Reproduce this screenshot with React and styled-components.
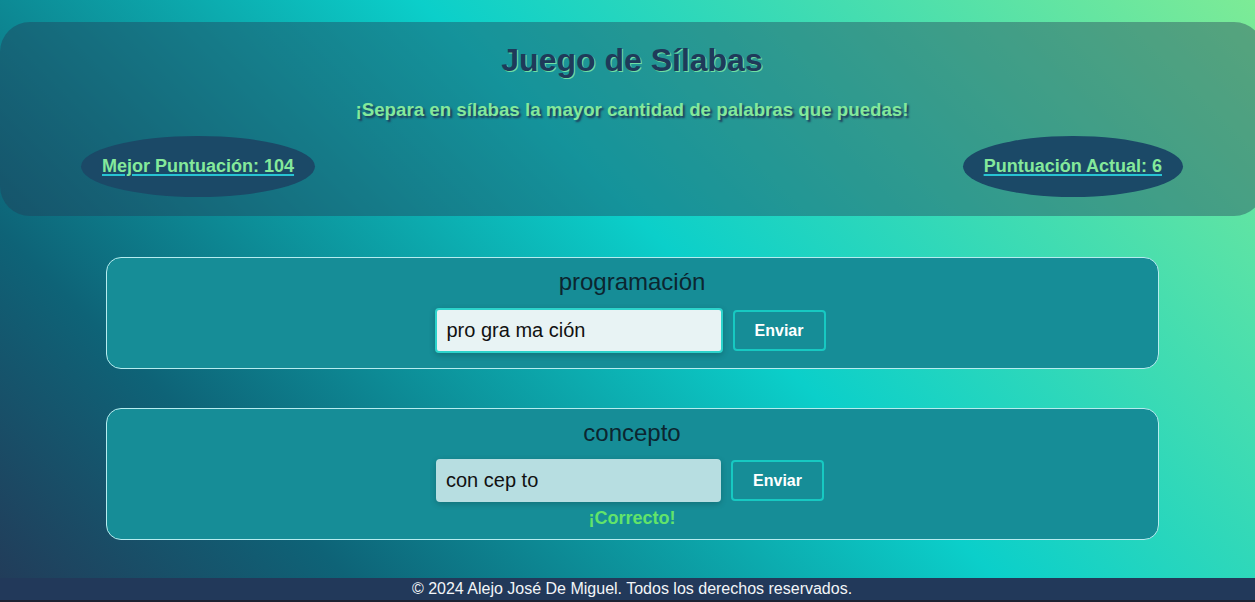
import React from "react";
import styled, { createGlobalStyle } from "styled-components";

const Global = createGlobalStyle`
  html, body {
    margin: 0;
    padding: 0;
    overflow-x: hidden;
  }
  body {
    min-height: 100vh;
    font-family: "Liberation Sans", Arial, sans-serif;
    background: linear-gradient(45deg, #233a58 0%, #0e6377 20%, #0bcfca 55%, #7deb96 100%);
  }
`;

const Page = styled.div`
  width: 1264px;
  display: flex;
  flex-direction: column;
  padding-top: 22px;
`;

const Header = styled.header`
  background: rgba(34, 58, 85, 0.4);
  border-radius: 30px;
  padding: 20px 81px 19px;
  display: flex;
  flex-direction: column;
  align-items: center;
`;

const Title = styled.h1`
  margin: 0;
  font-size: 32px;
  line-height: 37px;
  font-weight: 700;
  color: #1f3a5a;
  text-shadow: 1px 1px 0 #6fe0a4;
`;

const Subtitle = styled.h3`
  margin: 20px 0 0;
  font-size: 18.72px;
  line-height: 22px;
  font-weight: 700;
  color: #84e99b;
  text-shadow: 2px 2px 2px #1f3a5a;
`;

const ScoreRow = styled.div`
  align-self: stretch;
  display: flex;
  justify-content: space-between;
  margin-top: 15px;
`;

const ScoreBadge = styled.div`
  background: #1b4967;
  border-radius: 50%;
  padding: 20px 21px;
  font-size: 18px;
  line-height: 21px;
  font-weight: 700;
  color: #84e99b;
  text-decoration: underline;
  text-decoration-color: #27c4d4;
  text-decoration-thickness: 2px;
  text-underline-offset: 2px;
`;

const Main = styled.main`
  display: flex;
  flex-direction: column;
  align-items: center;
  gap: 39px;
  padding-top: 41px;
`;

const Card = styled.section`
  width: 1011px;
  padding: 10px 20px;
  border: 1px solid #b6ecef;
  border-radius: 15px;
  background: #168d97;
  display: flex;
  flex-direction: column;
  align-items: center;
`;

const Word = styled.h2`
  margin: 0 0 12px;
  font-size: 24px;
  line-height: 28px;
  font-weight: 400;
  color: #0c2630;
`;

const InputRow = styled.div`
  display: flex;
  align-items: center;
  gap: 10px;
  margin-left: -4px;
`;

const SyllableInput = styled.input`
  box-sizing: border-box;
  width: ${(p) => (p.$focused ? "288px" : "285px")};
  height: ${(p) => (p.$focused ? "45px" : "43px")};
  padding: 0 10px;
  border: ${(p) => (p.$focused ? "2px solid #2dd3cb" : "none")};
  border-radius: 4px;
  background: ${(p) => (p.$focused ? "#e8f3f4" : "#b7dee1")};
  font-family: "Liberation Sans", Arial, sans-serif;
  font-size: 20px;
  color: #111;
  box-shadow: 0 2px 6px rgba(0, 0, 0, 0.2);
  outline: none;
`;

const SendButton = styled.button`
  box-sizing: border-box;
  width: 93px;
  height: 41px;
  border: 2px solid #17c9c2;
  border-radius: 4px;
  background: transparent;
  color: #fff;
  font-family: "Liberation Sans", Arial, sans-serif;
  font-size: 16px;
  font-weight: 700;
  cursor: pointer;
`;

const Feedback = styled.p`
  margin: 5px 0 0;
  font-size: 18px;
  line-height: 22px;
  font-weight: 700;
  color: #62e46a;
`;

const Footer = styled.footer`
  margin-top: 38px;
  height: 22px;
  background: #22395a;
  border-bottom: 2px solid #1c2232;
  color: #f2f5f8;
  font-size: 16px;
  line-height: 22px;
  text-align: center;
`;

const words = [
  { word: "programación", value: "pro gra ma ción", focused: true, feedback: "" },
  { word: "concepto", value: "con cep to", focused: false, feedback: "¡Correcto!" },
];

export default function App() {
  return (
    <>
      <Global />
      <Page>
        <Header>
          <Title>Juego de Sílabas</Title>
          <Subtitle>¡Separa en sílabas la mayor cantidad de palabras que puedas!</Subtitle>
          <ScoreRow>
            <ScoreBadge>Mejor Puntuación: 104</ScoreBadge>
            <ScoreBadge>Puntuación Actual: 6</ScoreBadge>
          </ScoreRow>
        </Header>
        <Main>
          {words.map((w) => (
            <Card key={w.word}>
              <Word>{w.word}</Word>
              <InputRow>
                <SyllableInput $focused={w.focused} defaultValue={w.value} />
                <SendButton>Enviar</SendButton>
              </InputRow>
              <Feedback>{w.feedback}</Feedback>
            </Card>
          ))}
        </Main>
        <Footer>© 2024 Alejo José De Miguel. Todos los derechos reservados.</Footer>
      </Page>
    </>
  );
}
